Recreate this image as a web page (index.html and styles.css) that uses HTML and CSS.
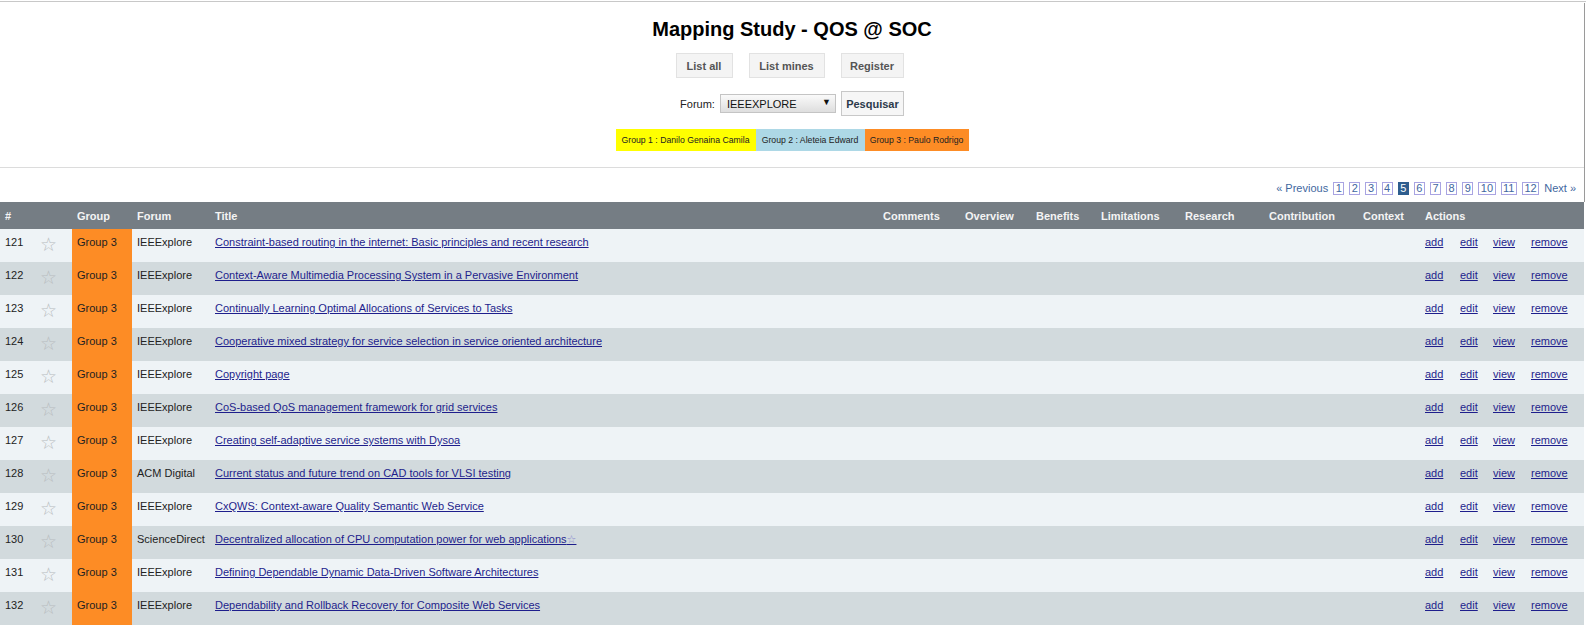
FILE: index.html
```html
<!DOCTYPE html>
<html>
<head>
<meta charset="utf-8">
<title>Mapping Study - QOS @ SOC</title>
<link rel="stylesheet" href="styles.css">
</head>
<body>
<div class="page">
  <div class="masthead">
    <header class="top">
      <h1 class="title">Mapping Study - QOS @ SOC</h1>
      <nav class="menu">
        <a class="menu-btn b-all" href="#">List all</a>
        <a class="menu-btn b-mine" href="#">List mines</a>
        <a class="menu-btn b-reg" href="#">Register</a>
      </nav>
      <form class="filter">
        <span class="filter-label">Forum:</span>
        <span class="select">IEEEXPLORE<span class="select-arrow">▼</span></span>
        <button class="search-btn" type="button">Pesquisar</button>
      </form>
      <div class="legend">
        <span class="legend-item g1">Group 1 : Danilo Genaina Camila</span>
        <span class="legend-item g2">Group 2 : Aleteia Edward</span>
        <span class="legend-item g3">Group 3 : Paulo Rodrigo</span>
      </div>
    </header>

    <div class="pager">
      <a class="pg-text" href="#">« Previous</a>
      <a class="pg" href="#">1</a>
      <a class="pg" href="#">2</a>
      <a class="pg" href="#">3</a>
      <a class="pg" href="#">4</a>
      <span class="pg current">5</span>
      <a class="pg" href="#">6</a>
      <a class="pg" href="#">7</a>
      <a class="pg" href="#">8</a>
      <a class="pg" href="#">9</a>
      <a class="pg" href="#">10</a>
      <a class="pg" href="#">11</a>
      <a class="pg" href="#">12</a>
      <a class="pg-text" href="#">Next »</a>
    </div>
  </div>

  <table class="grid">
    <colgroup>
      <col class="c-num"><col class="c-star"><col class="c-group"><col class="c-forum"><col class="c-title">
      <col class="c-comments"><col class="c-overview"><col class="c-benefits"><col class="c-limit">
      <col class="c-research"><col class="c-contrib"><col class="c-context">
      <col class="c-add"><col class="c-edit"><col class="c-view"><col class="c-remove">
    </colgroup>
    <thead>
      <tr>
        <th>#</th><th></th><th>Group</th><th>Forum</th><th>Title</th>
        <th>Comments</th><th>Overview</th><th>Benefits</th><th>Limitations</th>
        <th>Research</th><th>Contribution</th><th>Context</th><th colspan="4">Actions</th>
      </tr>
    </thead>
    <tbody>
      <tr class="odd"><td>121</td><td class="star">☆</td><td class="grp">Group 3</td><td>IEEExplore</td><td><a href="#">Constraint-based routing in the internet: Basic principles and recent research</a></td><td></td><td></td><td></td><td></td><td></td><td></td><td></td><td><a href="#">add</a></td><td><a href="#">edit</a></td><td><a href="#">view</a></td><td><a href="#">remove</a></td></tr>
      <tr class="even"><td>122</td><td class="star">☆</td><td class="grp">Group 3</td><td>IEEExplore</td><td><a href="#">Context-Aware Multimedia Processing System in a Pervasive Environment</a></td><td></td><td></td><td></td><td></td><td></td><td></td><td></td><td><a href="#">add</a></td><td><a href="#">edit</a></td><td><a href="#">view</a></td><td><a href="#">remove</a></td></tr>
      <tr class="odd"><td>123</td><td class="star">☆</td><td class="grp">Group 3</td><td>IEEExplore</td><td><a href="#">Continually Learning Optimal Allocations of Services to Tasks</a></td><td></td><td></td><td></td><td></td><td></td><td></td><td></td><td><a href="#">add</a></td><td><a href="#">edit</a></td><td><a href="#">view</a></td><td><a href="#">remove</a></td></tr>
      <tr class="even"><td>124</td><td class="star">☆</td><td class="grp">Group 3</td><td>IEEExplore</td><td><a href="#">Cooperative mixed strategy for service selection in service oriented architecture</a></td><td></td><td></td><td></td><td></td><td></td><td></td><td></td><td><a href="#">add</a></td><td><a href="#">edit</a></td><td><a href="#">view</a></td><td><a href="#">remove</a></td></tr>
      <tr class="odd"><td>125</td><td class="star">☆</td><td class="grp">Group 3</td><td>IEEExplore</td><td><a href="#">Copyright page</a></td><td></td><td></td><td></td><td></td><td></td><td></td><td></td><td><a href="#">add</a></td><td><a href="#">edit</a></td><td><a href="#">view</a></td><td><a href="#">remove</a></td></tr>
      <tr class="even"><td>126</td><td class="star">☆</td><td class="grp">Group 3</td><td>IEEExplore</td><td><a href="#">CoS-based QoS management framework for grid services</a></td><td></td><td></td><td></td><td></td><td></td><td></td><td></td><td><a href="#">add</a></td><td><a href="#">edit</a></td><td><a href="#">view</a></td><td><a href="#">remove</a></td></tr>
      <tr class="odd"><td>127</td><td class="star">☆</td><td class="grp">Group 3</td><td>IEEExplore</td><td><a href="#">Creating self-adaptive service systems with Dysoa</a></td><td></td><td></td><td></td><td></td><td></td><td></td><td></td><td><a href="#">add</a></td><td><a href="#">edit</a></td><td><a href="#">view</a></td><td><a href="#">remove</a></td></tr>
      <tr class="even"><td>128</td><td class="star">☆</td><td class="grp">Group 3</td><td>ACM Digital</td><td><a href="#">Current status and future trend on CAD tools for VLSI testing</a></td><td></td><td></td><td></td><td></td><td></td><td></td><td></td><td><a href="#">add</a></td><td><a href="#">edit</a></td><td><a href="#">view</a></td><td><a href="#">remove</a></td></tr>
      <tr class="odd"><td>129</td><td class="star">☆</td><td class="grp">Group 3</td><td>IEEExplore</td><td><a href="#">CxQWS: Context-aware Quality Semantic Web Service</a></td><td></td><td></td><td></td><td></td><td></td><td></td><td></td><td><a href="#">add</a></td><td><a href="#">edit</a></td><td><a href="#">view</a></td><td><a href="#">remove</a></td></tr>
      <tr class="even"><td>130</td><td class="star">☆</td><td class="grp">Group 3</td><td>ScienceDirect</td><td><a href="#">Decentralized allocation of CPU computation power for web applications<span class="mini-star">☆</span></a></td><td></td><td></td><td></td><td></td><td></td><td></td><td></td><td><a href="#">add</a></td><td><a href="#">edit</a></td><td><a href="#">view</a></td><td><a href="#">remove</a></td></tr>
      <tr class="odd"><td>131</td><td class="star">☆</td><td class="grp">Group 3</td><td>IEEExplore</td><td><a href="#">Defining Dependable Dynamic Data-Driven Software Architectures</a></td><td></td><td></td><td></td><td></td><td></td><td></td><td></td><td><a href="#">add</a></td><td><a href="#">edit</a></td><td><a href="#">view</a></td><td><a href="#">remove</a></td></tr>
      <tr class="even"><td>132</td><td class="star">☆</td><td class="grp">Group 3</td><td>IEEExplore</td><td><a href="#">Dependability and Rollback Recovery for Composite Web Services</a></td><td></td><td></td><td></td><td></td><td></td><td></td><td></td><td><a href="#">add</a></td><td><a href="#">edit</a></td><td><a href="#">view</a></td><td><a href="#">remove</a></td></tr>
    </tbody>
  </table>
</div>
</body>
</html>
```

FILE: styles.css
```css
html, body {
  margin: 0;
  padding: 0;
  background: #ffffff;
}
body {
  font-family: "Liberation Sans", Arial, sans-serif;
  font-size: 11px;
  color: #222;
  padding-top: 1px;
}
.page {
  border-top: 1px solid #c8c8c8;
  padding-top: 1px;
  width: 1586px;
}
.masthead {
  width: 1585px;
  box-sizing: border-box;
  border-right: 1px solid #9a9a9a;
  padding-bottom: 7px;
}
.top {
  padding: 15px 0 16px;
  border-bottom: 1px solid #dcdcdc;
  display: flex;
  flex-direction: column;
  align-items: center;
}
.title {
  margin: 0;
  font-size: 20px;
  line-height: 23px;
  font-weight: bold;
  color: #000;
}
.menu {
  display: flex;
  gap: 16px;
  margin-top: 12px;
  padding-right: 5px;
}
.menu-btn {
  display: flex;
  align-items: center;
  justify-content: center;
  box-sizing: border-box;
  height: 25px;
  background: #f4f4f4;
  border: 1px solid #e2e2e2;
  color: #555;
  font-weight: bold;
  text-decoration: none;
}
.b-all { width: 57px; }
.b-mine { width: 76px; }
.b-reg { width: 63px; }
.filter {
  display: flex;
  align-items: center;
  margin: 13px 0 0;
  height: 25px;
}
.filter-label {
  color: #222;
  margin-right: 5px;
}
.select {
  position: relative;
  display: flex;
  align-items: center;
  width: 108px;
  height: 17px;
  padding-left: 6px;
  border: 1px solid #c4c4c4;
  background: linear-gradient(#fafafa, #dedede);
  color: #111;
}
.select-arrow {
  position: absolute;
  right: 4px;
  top: 2px;
  font-size: 9px;
  color: #111;
}
.search-btn {
  margin-left: 5px;
  height: 25px;
  width: 63px;
  padding: 0;
  border: 1px solid #c8c8c8;
  background: #f6f6f6;
  font-family: "Liberation Sans", Arial, sans-serif;
  font-size: 11px;
  font-weight: bold;
  color: #2c3a4a;
}
.legend {
  display: flex;
  margin-top: 13px;
  height: 22px;
}
.legend-item {
  display: flex;
  align-items: center;
  justify-content: center;
  box-sizing: border-box;
  white-space: nowrap;
  font-size: 8.7px;
  color: #222;
}
.g1 { background: #ffff00; width: 140px; }
.g2 { background: #add8e6; width: 109px; }
.g3 { background: #fd8c25; width: 104px; }

.pager {
  display: flex;
  justify-content: flex-end;
  align-items: center;
  gap: 5px;
  height: 14px;
  margin: 13px 8px 0 0;
}
.pg-text {
  color: #3f67a0;
  text-decoration: none;
}
.pg {
  display: inline-block;
  line-height: 11px;
  padding: 0 1.5px;
  border: 1px solid #a9a4e2;
  color: #3f67a0;
  text-decoration: none;
}
.pg.current {
  background: #2e5d8e;
  border-color: #2e5d8e;
  color: #fff;
}

.grid {
  width: 1584px;
  border-collapse: collapse;
  table-layout: fixed;
}
.c-num { width: 35px; }
.c-star { width: 37px; }
.c-group { width: 60px; }
.c-forum { width: 78px; }
.c-title { width: 668px; }
.c-comments { width: 82px; }
.c-overview { width: 71px; }
.c-benefits { width: 65px; }
.c-limit { width: 84px; }
.c-research { width: 84px; }
.c-contrib { width: 94px; }
.c-context { width: 62px; }
.c-add { width: 35px; }
.c-edit { width: 33px; }
.c-view { width: 38px; }
.c-remove { width: 58px; }

.grid th {
  background: #757d84;
  color: #f4f4f4;
  font-weight: bold;
  text-align: left;
  height: 27px;
  padding: 0 5px;
  vertical-align: middle;
  white-space: nowrap;
}
.grid td {
  height: 33px;
  padding: 7px 5px 0;
  vertical-align: top;
  white-space: nowrap;
  box-sizing: border-box;
  line-height: 13px;
}
.grid tr.odd td { background: #eef3f6; }
.grid tr.even td { background: #d2dadd; }
.grid tr td.grp { background: #fd8c25; color: #222; }
.grid td.star {
  font-family: "DejaVu Sans", sans-serif;
  font-size: 19px;
  line-height: 19px;
  color: #b8bcbf;
  padding-top: 6px;
}
.grid a {
  color: #1e1e8c;
  text-decoration: underline;
}
.mini-star {
  font-family: "DejaVu Sans", sans-serif;
  color: #8d8dd0;
}
```
